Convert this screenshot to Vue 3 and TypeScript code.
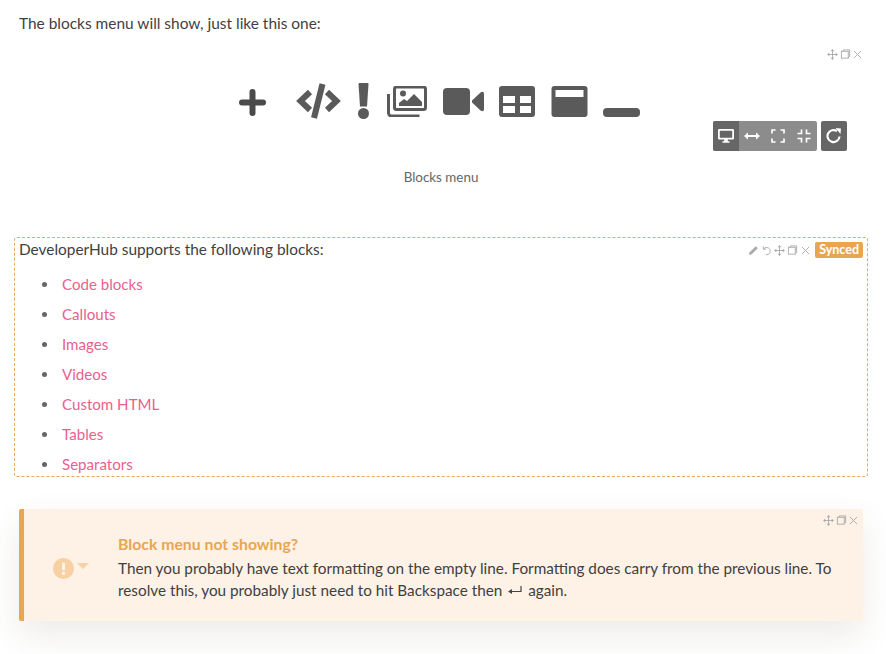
<script setup lang="ts">
const items: string[] = ['Code blocks', 'Callouts', 'Images', 'Videos', 'Custom HTML', 'Tables', 'Separators']
</script>

<template>
  <div class="page">
    <p class="intro">The blocks menu will show, just like this one:</p>

    <section class="figure">
      <div class="tools">
        <svg viewBox="0 0 12 12" class="tool"><path d="M6 2v8M2 6h8" class="line" /><path class="head" d="M6 0l2 2.500H4zM6 12l2-2.500H4zM0 6l2.500-2v4zM12 6 9.500 4v4z" /></svg>
        <svg viewBox="0 0 12 12" class="tool"><rect x="1.500" y="2.500" width="7.500" height="7.500" class="line" /><path d="M3.500 2.500V1h7v7.500H9" class="line" /></svg>
        <svg viewBox="0 0 12 12" class="tool"><path d="m2 2 8 8M10 2l-8 8" class="line" /></svg>
      </div>

      <div class="menu">
        <svg class="i plus" viewBox="0 0 27 27"><path d="M13.500 3v21M3 13.500h21" /></svg>
        <svg class="i code" viewBox="0 0 45 36"><path d="M14 9 4.500 18l9.500 9M31 9l9.500 9-9.500 9" class="s" /><path d="M26.500 1 18 35" class="s" /></svg>
        <svg class="i bang" viewBox="0 0 11 36"><path d="M.5 1a1 1 0 0 1 1-1h8a1 1 0 0 1 1 1L9 23.500H2z" /><circle cx="5.500" cy="30.500" r="5.500" /></svg>
        <svg class="i images" viewBox="0 0 40 31"><rect x="7.500" y="1" width="31" height="22.500" rx="2" class="t" /><path d="M1.500 8v19a3 3 0 0 0 3 3h28" class="t" /><circle cx="16" cy="7.500" r="3" /><path d="M12 20v-3l5-4 3 2 7-7 8 8v4z" /></svg>
        <svg class="i video" viewBox="0 0 41 27"><rect x="0" y="0" width="27" height="27" rx="4" /><path d="M29 12.500 37.500 4.500q3.500-2 3.500 1.500v15q0 3.500-3.500 1.500L29 14.500z" /></svg>
        <svg class="i table" viewBox="0 0 36 31"><path fill-rule="evenodd" d="M3 0h30a3 3 0 0 1 3 3v25a3 3 0 0 1-3 3H3a3 3 0 0 1-3-3V3a3 3 0 0 1 3-3zm1 10v7h12v-7zm17 0v7h11v-7zM4 20v7h12v-7zm17 0v7h11v-7z" /></svg>
        <svg class="i panel" viewBox="0 0 36 31"><path fill-rule="evenodd" d="M3 0h30a3 3 0 0 1 3 3v25a3 3 0 0 1-3 3H3a3 3 0 0 1-3-3V3a3 3 0 0 1 3-3zm1 4v7h28V4z" /></svg>
        <svg class="i rule" viewBox="0 0 37 9"><rect width="37" height="9" rx="4" /></svg>
      </div>

      <div class="viewbar">
        <div class="group">
          <span class="cell dark">
            <svg viewBox="0 0 18 16"><path fill-rule="evenodd" fill="#fff" d="M1.500 0h15A1.500 1.500 0 0 1 18 1.500v9a1.500 1.500 0 0 1-1.500 1.500H11v2h2v1.500H5V14h2v-2H1.500A1.500 1.500 0 0 1 0 10.500v-9A1.500 1.500 0 0 1 1.500 0zM2 2v8h14V2z" /></svg>
          </span>
          <span class="cell">
            <svg viewBox="0 0 16 16"><path d="M2 8h12" stroke="#fff" stroke-width="2" /><path fill="#fff" d="M0 8l4-3.500v7zM16 8l-4-3.500v7z" /></svg>
          </span>
          <span class="cell">
            <svg viewBox="0 0 16 16"><path d="M2 5.500V2h3.500M10.500 2H14v3.500M14 10.500V14h-3.500M5.500 14H2v-3.500" fill="none" stroke="#fff" stroke-width="1.700" /></svg>
          </span>
          <span class="cell">
            <svg viewBox="0 0 16 16"><path d="M5.500 1.500v4H1.500M10.500 1.500v4h4M10.500 14.500v-4h4M5.500 14.500v-4h-4" fill="none" stroke="#fff" stroke-width="1.700" /></svg>
          </span>
        </div>
        <span class="cell dark single">
          <svg viewBox="0 0 16 16"><path d="M13.500 8.500A6 6 0 1 1 11 3.200" fill="none" stroke="#fff" stroke-width="2.200" /><path fill="#fff" d="M9.500 0 15 .5 14.500 6z" /></svg>
        </span>
      </div>

      <p class="caption">Blocks menu</p>
    </section>

    <section class="synced">
      <div class="tools synced-tools">
        <svg viewBox="0 0 12 12" class="tool"><path d="M1 11l.8-3L8.500 1.300l2.200 2.200L4 10.200z" fill="#aaa" /></svg>
        <svg viewBox="0 0 12 12" class="tool"><path d="M2.500 1.500v3h3M2.700 4.500A4 4 0 1 1 5 10.500" class="line" /></svg>
        <svg viewBox="0 0 12 12" class="tool"><path d="M6 2v8M2 6h8" class="line" /><path class="head" d="M6 0l2 2.500H4zM6 12l2-2.500H4zM0 6l2.500-2v4zM12 6 9.500 4v4z" /></svg>
        <svg viewBox="0 0 12 12" class="tool"><rect x="1.500" y="2.500" width="7.500" height="7.500" class="line" /><path d="M3.500 2.500V1h7v7.500H9" class="line" /></svg>
        <svg viewBox="0 0 12 12" class="tool"><path d="m2 2 8 8M10 2l-8 8" class="line" /></svg>
        <span class="badge">Synced</span>
      </div>
      <p class="lead">DeveloperHub supports the following blocks:</p>
      <ul class="list">
        <li v-for="item in items" :key="item"><a href="#" @click.prevent>{{ item }}</a></li>
      </ul>
    </section>

    <section class="callout">
      <div class="tools callout-tools">
        <svg viewBox="0 0 12 12" class="tool"><path d="M6 2v8M2 6h8" class="line" /><path class="head" d="M6 0l2 2.500H4zM6 12l2-2.500H4zM0 6l2.500-2v4zM12 6 9.500 4v4z" /></svg>
        <svg viewBox="0 0 12 12" class="tool"><rect x="1.500" y="2.500" width="7.500" height="7.500" class="line" /><path d="M3.500 2.500V1h7v7.500H9" class="line" /></svg>
        <svg viewBox="0 0 12 12" class="tool"><path d="m2 2 8 8M10 2l-8 8" class="line" /></svg>
      </div>
      <div class="picker">
        <svg class="alert" viewBox="0 0 21 21"><circle cx="10.500" cy="10.500" r="10.500" fill="#f7d0a3" /><rect x="9" y="4.500" width="3" height="8" rx="1.200" fill="#fff3e8" /><circle cx="10.500" cy="15.300" r="1.700" fill="#fff3e8" /></svg>
        <span class="caret"></span>
      </div>
      <div class="body">
        <h4>Block menu not showing?</h4>
        <p class="ln">Then you probably have text formatting on the empty line. Formatting does carry from the previous line. To</p>
        <p class="ln">resolve this, you probably just need to hit Backspace then <svg class="enter" viewBox="0 0 14 10"><path d="M13 0v5.500H2" fill="none" stroke="#444" stroke-width="1.200" /><path d="M0 5.500 4 3v5z" fill="#444" /></svg> again.</p>
      </div>
    </section>
  </div>
</template>

<style>
html, body { background: #fff; }
</style>

<style scoped>
.page {
  width: 886px;
  height: 654px;
  overflow: hidden;
  box-sizing: border-box;
  padding: 13px 18px 0 19px;
  font-family: "Lato", "Noto Sans", sans-serif;
  font-size: 15.400px;
  color: #3f3f3f;
}
p { margin: 0; }
.intro { line-height: 20px; font-size: 15.450px; }

.figure {
  position: relative;
  height: 157px;
  margin-top: 15px;
}
.tools {
  position: absolute;
  display: flex;
  align-items: center;
  gap: 1.500px;
}
.figure > .tools { top: 1px; right: 5px; }
.tool { width: 11px; height: 11px; }
.line { fill: none; stroke: #aaa; stroke-width: 1; }
.head { fill: #aaa; }
.menu {
  position: absolute;
  left: 0;
  right: 0;
  top: 0;
  height: 72px;
}
.i { position: absolute; fill: #5a5a5a; }
.plus { left: 220px; top: 41px; width: 27px; height: 27px; }
.plus path { fill: none; stroke: #4a4a4a; stroke-width: 6; stroke-linecap: round; }
.code { left: 277px; top: 35px; width: 45px; height: 36px; }
.s { fill: none; stroke: #5a5a5a; stroke-width: 6; }
.bang { left: 339px; top: 35px; width: 11px; height: 36px; }
.images { left: 368px; top: 38px; width: 40px; height: 31px; }
.t { fill: none; stroke: #5a5a5a; stroke-width: 3; }
.video { left: 424px; top: 40px; width: 41px; height: 27px; }
.table { left: 480px; top: 38px; width: 36px; height: 31px; }
.panel { left: 532px; top: 38px; width: 37px; height: 31px; }
.rule { left: 584px; top: 60px; width: 37px; height: 9px; }

.viewbar {
  position: absolute;
  top: 73px;
  right: 21px;
  display: flex;
  gap: 4px;
}
.group {
  display: flex;
  background: #8c8c8c;
  border-radius: 2px;
  overflow: hidden;
}
.cell {
  width: 26px;
  height: 30px;
  display: flex;
  align-items: center;
  justify-content: center;
}
.cell svg { width: 16px; height: 16px; }
.dark { background: #666; }
.single { border-radius: 2px; }
.caption {
  position: absolute;
  left: 0;
  right: 5px;
  top: 121px;
  text-align: center;
  font-size: 13.400px;
  line-height: 16px;
  color: #666;
}

.synced {
  position: relative;
  box-sizing: border-box;
  margin: 32px 0 0 -5px;
  width: 854px;
  height: 240px;
  overflow: hidden;
  padding-left: 4px;
  border: 1px dashed #e8a860;
  border-radius: 3px;
}
.synced-tools { top: 4px; right: 4px; gap: 2px; }
.badge {
  margin-left: 2px;
  padding: 0 4px;
  height: 16px;
  line-height: 16px;
  font-size: 12.500px;
  font-weight: 700;
  color: #fff;
  background: #e9a650;
  border-radius: 2px;
}
.lead { line-height: 22px; }
.list {
  margin: 9px 0 0;
  padding: 0 0 0 23px;
  list-style: none;
  font-size: 15.100px;
}
.list li {
  display: flex;
  align-items: center;
  height: 30px;
  line-height: 30px;
}
.list li::before {
  content: "";
  width: 5px;
  height: 5px;
  margin-right: 15px;
  border-radius: 50%;
  background: #666;
}
.list a { color: #ea5f8f; text-decoration: none; }

.callout {
  position: relative;
  box-sizing: border-box;
  display: flex;
  align-items: center;
  width: 844px;
  height: 112px;
  margin-top: 32px;
  background: #fef1e6;
  border-left: 5px solid #e9a650;
  border-radius: 2px 0 0 2px;
  box-shadow: 0 14px 34px rgba(90, 70, 50, 0.11);
}
.callout-tools { top: 6px; right: 4px; }
.picker {
  display: flex;
  align-items: center;
  gap: 3px;
  width: 94px;
  padding: 6px 0 0 29px;
  box-sizing: border-box;
}
.alert { width: 21px; height: 21px; }
.caret {
  width: 0;
  height: 0;
  margin-bottom: 5px;
  border-left: 6px solid transparent;
  border-right: 6px solid transparent;
  border-top: 6px solid #f7d0a3;
}
.body { width: 725px; padding-top: 4px; font-size: 15.300px; }
.body h4 {
  margin: 0 0 2px;
  font-size: 15.800px;
  font-weight: 700;
  line-height: 22px;
  color: #e9a650;
}
.ln { line-height: 22px; white-space: nowrap; }
.enter { width: 14px; height: 10px; margin: 0 2px; }
</style>
